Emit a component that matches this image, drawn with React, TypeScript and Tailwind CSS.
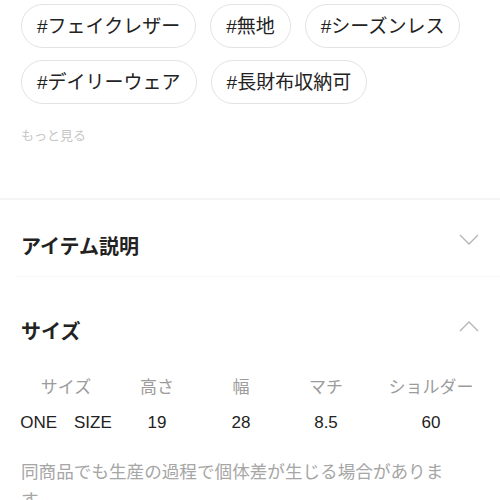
import React from 'react';

const tags = ['#フェイクレザー', '#無地', '#シーズンレス', '#デイリーウェア', '#長財布収納可'];

const sizeHeaders = ['サイズ', '高さ', '幅', 'マチ', 'ショルダー'];
const sizeRow = ['ONE　SIZE', '19', '28', '8.5', '60'];

const Chevron: React.FC<{ up?: boolean }> = ({ up }) => (
  <svg width="22" height="12" viewBox="0 0 22 12" fill="none" stroke="#b4b4b4" strokeWidth={1.3}>
    {up ? <path d="M2 11L11 2L20 11" /> : <path d="M2 1L11 10L20 1" />}
  </svg>
);

const App: React.FC = () => {
  return (
    <div
      className="w-[500px] h-[500px] overflow-hidden bg-white text-[#222]"
      style={{ fontFamily: '"Liberation Sans", "Noto Sans CJK JP", sans-serif' }}
    >
      {/* Tags */}
      <div className="px-[21px] pt-[4px]">
        <div className="flex flex-wrap gap-x-[14px] gap-y-[12px]">
          {tags.map((tag) => (
            <span
              key={tag}
              className="flex items-center h-[44px] px-[15px] rounded-full border border-[#e3e3e3] text-[19px] leading-none"
            >
              {tag}
            </span>
          ))}
        </div>
        <p className="mt-[22px] text-[13px] leading-[20px] text-[#c6c6c6]">もっと見る</p>
      </div>

      <div className="mt-[52px] h-[2px] bg-[#f5f5f5]" />

      {/* Item description */}
      <div className="flex items-start justify-between pl-[21px] pr-[20px] pt-[36px] pb-[18px]">
        <h2 className="text-[20px] leading-[22px] font-bold">アイテム説明</h2>
        <div className="mt-[-2px]">
          <Chevron />
        </div>
      </div>
      <div className="ml-[15px] h-px bg-[#f6f6f6]" />

      {/* Size */}
      <div className="flex items-start justify-between pl-[21px] pr-[20px] pt-[44px]">
        <h2 className="text-[20px] leading-[22px] font-bold">サイズ</h2>
        <div className="mt-[-1px]">
          <Chevron up />
        </div>
      </div>

      <div className="pl-[20px] mt-[33px]">
        <div className="grid grid-cols-[92px_90px_78px_92px_118px] text-[17px] leading-[24px] text-center">
          {sizeHeaders.map((h) => (
            <span key={h} className="text-[#9c9c9c] whitespace-nowrap">
              {h}
            </span>
          ))}
        </div>
        <div className="grid grid-cols-[92px_90px_78px_92px_118px] mt-[11px] text-[17px] leading-[24px] text-center">
          {sizeRow.map((v, i) => (
            <span key={i} className="whitespace-nowrap">
              {v}
            </span>
          ))}
        </div>
      </div>

      <p className="ml-[21px] mt-[23px] w-[436px] text-[17.6px] leading-[28px] text-[#a6a6a6]">
        同商品でも生産の過程で個体差が生じる場合があります。
      </p>
    </div>
  );
};

export default App;
